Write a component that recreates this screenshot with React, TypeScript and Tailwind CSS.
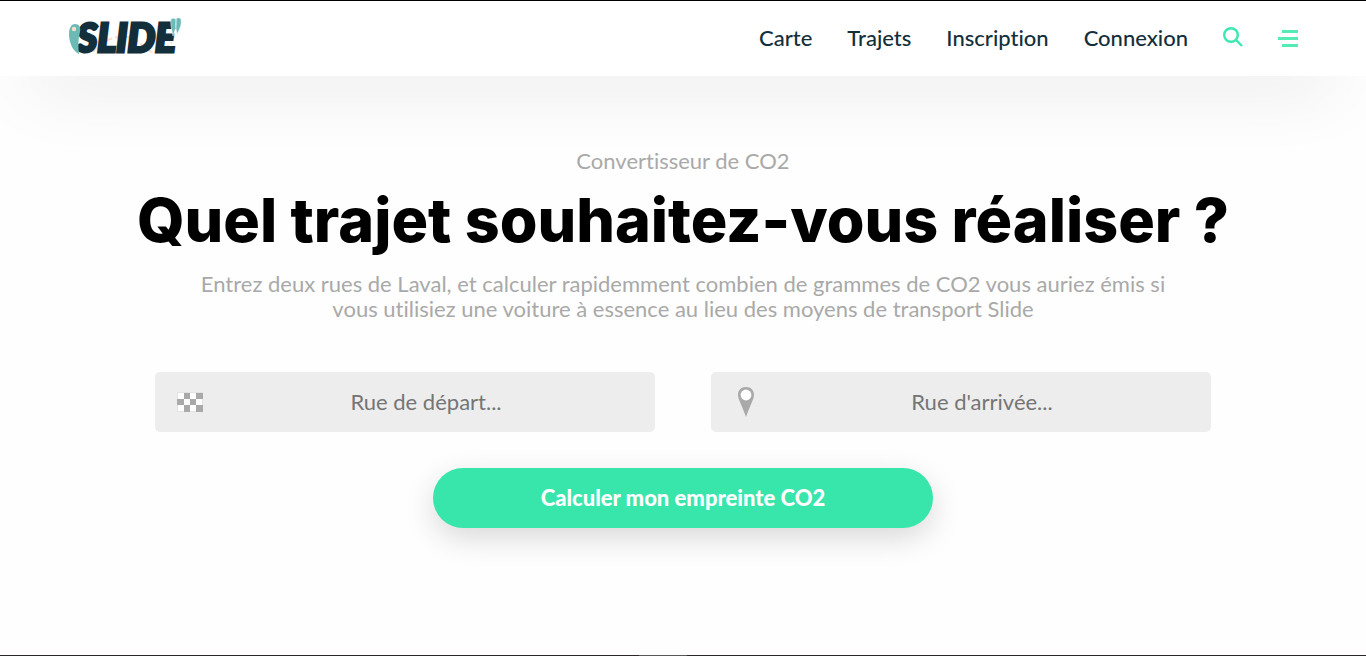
import React from 'react';

const links = ['Carte', 'Trajets', 'Inscription', 'Connexion'];

function Logo() {
  return (
    <svg width="116" height="44" viewBox="0 0 116 44" role="img" aria-label="Slide" className="block overflow-visible">
      <g fill="none" stroke="#fbdccf" strokeWidth="2" strokeDasharray="6 3">
        <path d="M25 35C33 24 47 18 60 20S77 36 87 35S100 29 104 25" />
      </g>
      <text
        x="9"
        y="35"
        fill="#132f3c"
        stroke="#132f3c"
        strokeWidth="3"
        strokeLinejoin="miter"
        className="font-['Lato',sans-serif] text-[39px] font-black italic"
      >
        SLIDE
      </text>
      <path d="M1 17C1 10 4 7 7 7C11 7 13 10 12 15C10 22 10 29 11 37C4 34 1 24 1 17Z" fill="#6bbab5" />
      <circle cx="6" cy="12" r="2.2" fill="#fbdccf" />
      <path
        d="M103 2C102 7 104 14 105 19C107 14 109 8 108 2C106 1 104 1 103 2ZM108 2C107 7 108 12 109 17C112 12 114 7 113 2C111 0 109 1 108 2Z"
        fill="#6bbab5"
        stroke="#fff"
        strokeWidth="0.5"
      />
    </svg>
  );
}

function SearchIcon() {
  return (
    <svg width="20" height="24" viewBox="0 0 20 24" fill="none" stroke="#3be8b0" strokeWidth="2.4" aria-hidden="true">
      <circle cx="8" cy="8" r="6.8" />
      <path d="M13 13L19 19" />
    </svg>
  );
}

function MenuIcon() {
  return (
    <svg width="20" height="18" viewBox="0 0 20 18" fill="#55ebb4" aria-hidden="true">
      <path d="M4 0H20V3H4ZM0 7H20V10H0ZM4 14H20V17H4Z" />
    </svg>
  );
}

function FlagIcon() {
  return (
    <svg width="26" height="20" viewBox="0 0 26 20" aria-hidden="true">
      <path d="M0 0H26V20H0Z" fill="#e2e2e2" />
      <path d="M1 1H7V7H1ZM13 1H19V7H13ZM7 7H13V13H7ZM19 7H25V13H19ZM1 13H7V19H1ZM13 13H19V19H13Z" fill="#fff" />
      <path d="M7 1H13V7H7ZM19 1H26V7H19ZM0 7H7V13H0ZM13 7H19V13H13ZM7 13H13V20H7ZM19 13H26V20H19Z" fill="#a9a9a9" />
    </svg>
  );
}

function PinIcon() {
  return (
    <svg width="16" height="30" viewBox="0 0 16 30" aria-hidden="true">
      <path d="M8 0C3 0 0 3.5 0 8C0 12 3 16 8 30C13 16 16 12 16 8C16 3.5 13 0 8 0Z" fill="#a9a9a9" />
      <circle cx="8" cy="8" r="5.4" fill="#fff" />
    </svg>
  );
}

function StreetField({ label, icon }: { label: string; icon: React.ReactNode }) {
  return (
    <label className="flex h-15 flex-1 items-center rounded-[5px] bg-[#ededed]">
      <span className="flex w-[70px] justify-center">{icon}</span>
      <input
        type="text"
        aria-label={label}
        placeholder={label}
        className="h-full min-w-0 flex-1 bg-transparent pr-7 pb-0.5 text-center text-[22px] text-[#757575] outline-none placeholder:text-[#757575]"
      />
    </label>
  );
}

export default function App() {
  return (
    <div className="flex min-h-screen flex-col border-t border-black bg-[#fefefe] font-['Lato',sans-serif] [font-variant-ligatures:none]">
      <header className="flex h-[75px] items-center justify-between bg-white px-17 shadow-[0_32px_70px_-30px_rgba(0,0,0,0.23)]">
        <a href="#accueil">
          <Logo />
        </a>
        <nav className="flex items-center gap-[35px] text-[22px] font-medium text-[#132f3c]">
          {links.map((link) => (
            <a key={link} href={`#${link.toLowerCase()}`} className="pb-0.5">
              {link}
            </a>
          ))}
          <button type="button" aria-label="Rechercher">
            <SearchIcon />
          </button>
          <button type="button" aria-label="Menu">
            <MenuIcon />
          </button>
        </nav>
      </header>

      <main className="flex flex-1 flex-col items-center px-6 pt-[72px] text-center">
        <p className="text-[22px] leading-[25px] text-[#a9a9a9]">Convertisseur de CO2</p>
        <h1 className="mt-2 font-['Inter',sans-serif] text-[61px] leading-[78px] font-extrabold text-black">
          Quel trajet souhaitez-vous réaliser ?
        </h1>
        <p className="mt-3 text-[22px] leading-[25px] text-[#a9a9a9]">
          Entrez deux rues de Laval, et calculer rapidemment combien de grammes de CO2 vous auriez émis si
          <br />
          vous utilisiez une voiture à essence au lieu des moyens de transport Slide
        </p>
        <form className="mt-[51px] flex w-full max-w-[1056px] flex-col items-center gap-9">
          <div className="flex w-full gap-14">
            <StreetField label="Rue de départ..." icon={<FlagIcon />} />
            <StreetField label="Rue d'arrivée..." icon={<PinIcon />} />
          </div>
          <button
            type="button"
            className="h-15 w-full max-w-[500px] rounded-full bg-[#38e6ac] pb-0.5 text-[22px] font-black text-white shadow-[0_10px_30px_rgba(0,0,0,0.15)]"
          >
            Calculer mon empreinte CO2
          </button>
        </form>
      </main>
      <footer className="flex h-px justify-center bg-[#2b2628] pr-10">
        <span className="w-12 bg-[#5c5658]" />
      </footer>
    </div>
  );
}
